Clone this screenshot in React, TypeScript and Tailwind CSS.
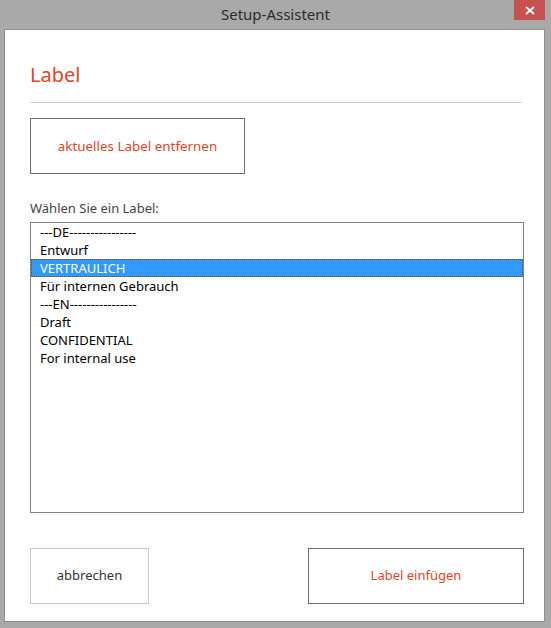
const items = [
  "---DE----------------",
  "Entwurf",
  "VERTRAULICH",
  "Für internen Gebrauch",
  "---EN----------------",
  "Draft",
  "CONFIDENTIAL",
  "For internal use",
];

export default function App() {
  const selected = 2;
  return (
    <div
      className="w-[551px] h-[628px] bg-[#a9a9a9] flex flex-col"
      style={{ fontFamily: '"Noto Sans", "Open Sans", sans-serif' }}
    >
      {/* title bar */}
      <div className="relative h-[29px] flex items-center justify-center">
        <span className="text-[15px] text-[#2b2b2b]">Setup-Assistent</span>
        <button className="absolute right-[6px] top-0 w-[31px] h-[20px] bg-[#c75050] flex items-center justify-center">
          <svg width="10" height="9" viewBox="0 0 10 9">
            <path d="M1 1 L9 8 M9 1 L1 8" stroke="white" strokeWidth="1.8" />
          </svg>
        </button>
      </div>

      {/* dialog body */}
      <div className="ml-[4px] mr-[6px] mb-[6px] flex-1 bg-white border border-[#8f8f8f] flex flex-col pl-[25px] pr-[20px]">
        <h1 className="mt-[32px] text-[20px] leading-[26px] text-[#e0452b]">Label</h1>
        <div className="mt-[14px] mr-[2px] border-t border-[#d0d0d0]" />

        <button className="mt-[15px] w-[215px] h-[56px] border border-[#6d6d6d] text-[13.4px] text-[#e0452b]">
          aktuelles Label entfernen
        </button>

        <div className="mt-[25px] text-[13px] leading-[18px] text-[#444]">Wählen Sie ein Label:</div>

        <div className="mt-[5px] h-[291px] border border-[#828282] text-[13px] leading-[18px]">
          {items.map((t, i) =>
            i === selected ? (
              <div
                key={i}
                className="h-[18px] pl-[9px] bg-[#3399ff] text-white outline outline-1 outline-dotted outline-[#7a4a00] -outline-offset-1"
              >
                {t}
              </div>
            ) : (
              <div key={i} className="h-[18px] pl-[9px] text-black">
                {t}
              </div>
            )
          )}
        </div>

        <div className="mt-[35px] flex justify-between">
          <button className="w-[119px] h-[56px] border border-[#cccccc] text-[13px] text-[#333]">
            abbrechen
          </button>
          <button className="w-[216px] h-[56px] border border-[#6d6d6d] text-[13px] text-[#e0452b]">
            Label einfügen
          </button>
        </div>
      </div>
    </div>
  );
}
